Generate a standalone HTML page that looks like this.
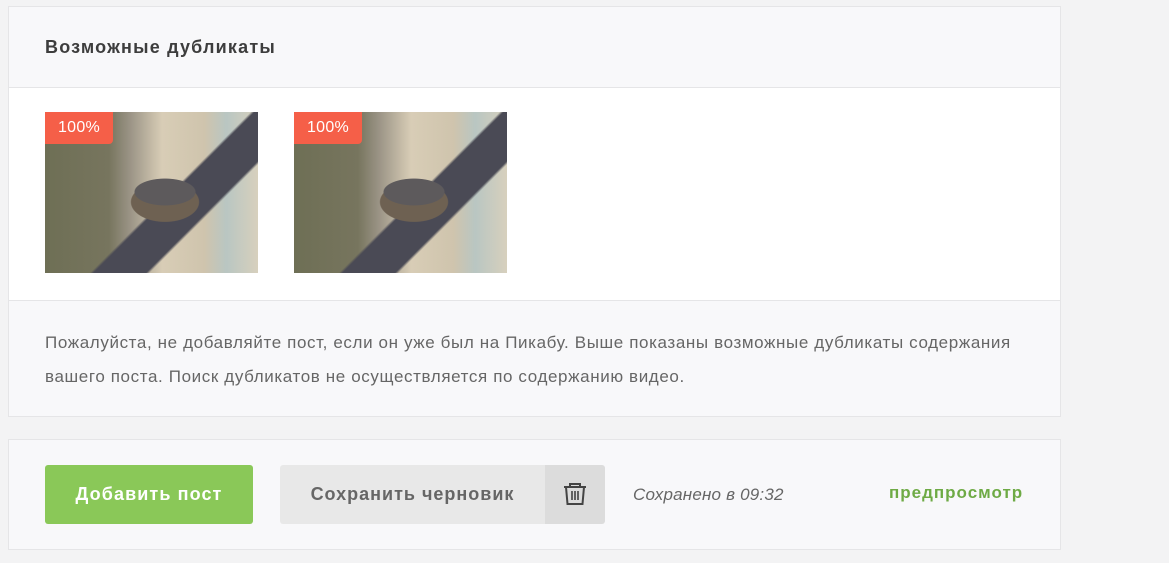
<!DOCTYPE html>
<html><head><meta charset="utf-8"><style>
body{margin:0;width:1169px;height:563px;background:#f3f3f4;font-family:"Liberation Sans","DejaVu Sans",sans-serif;position:relative;overflow:hidden}
.p{position:absolute;left:8px;width:1053px;border:1px solid #e5e5e7;background:#f8f8fa;box-sizing:border-box}
.abs{position:absolute}
.img{position:absolute;top:112px;width:213px;height:161px;overflow:hidden;
background:
radial-gradient(ellipse 50px 22px at 120px 80px,#5d5a5c 60%,transparent 62%),
radial-gradient(ellipse 48px 28px at 120px 90px,#6e6152 70%,transparent 72%),
linear-gradient(135deg,transparent 55%,#4a4a55 56%,#4a4a55 70%,transparent 71%),
linear-gradient(90deg,#6e6f55 0,#77755e 30%,#9b9486 40%,#d8cdb6 55%,#cfc4ad 75%,#b9c6c2 85%,#d7d0bd 100%)}
.badge{position:absolute;left:0;top:0;width:68px;height:32px;background:#f55f48;border-radius:0 0 4px 0;color:#fff;font-size:16px;line-height:32px;text-align:center;letter-spacing:0.3px}
</style></head><body>
<div class="p" style="top:6px;height:411px">
 <div class="abs" style="left:0;top:0;right:0;height:80px;border-bottom:1px solid #e5e5e7;"></div>
 <div class="abs" style="left:36px;top:30px;font-size:18px;color:#3d3d3d;font-weight:bold;letter-spacing:1.2px">Возможные дубликаты</div>
 <div class="abs" style="left:0;right:0;top:81px;height:212px;background:#fff;border-bottom:1px solid #e5e5e7"></div>
 <div class="abs" style="left:36px;top:319px;font-size:17px;line-height:34px;color:#666;width:1040px;letter-spacing:0.62px">Пожалуйста, не добавляйте пост, если он уже был на Пикабу. Выше показаны возможные дубликаты содержания<br>вашего поста. Поиск дубликатов не осуществляется по содержанию видео.</div>
</div>
<div class="img" style="left:45px"><div class="badge">100%</div></div>
<div class="img" style="left:294px"><div class="badge">100%</div></div>
<div class="p" style="top:439px;height:111px"></div>
<div class="abs" style="left:45px;top:465px;width:208px;height:59px;background:#8ac858;border-radius:3px;color:#fff;font-size:18px;font-weight:bold;line-height:59px;text-align:center;letter-spacing:1.1px">Добавить пост</div>
<div class="abs" style="left:280px;top:465px;width:265px;height:59px;background:#e8e8e8;border-radius:3px 0 0 3px;color:#666;font-size:18px;font-weight:bold;line-height:59px;text-align:center;letter-spacing:1px">Сохранить черновик</div>
<div class="abs" style="left:545px;top:465px;width:60px;height:59px;background:#dcdcdc;border-radius:0 3px 3px 0">
<svg width="60" height="59" viewBox="0 0 60 59"><g fill="none" stroke="#444" stroke-width="2"><path d="M19 22h22M25 22v-3h10v3M21 22l1.5 17h15l1.5-17"/><path d="M27 26v9M30 26v9M33 26v9" stroke-width="1.6"/></g></svg></div>
<div class="abs" style="left:633px;top:485px;font-size:17px;font-style:italic;color:#666;letter-spacing:0.2px">Сохранено в 09:32</div>
<div class="abs" style="left:889px;top:483px;font-size:17px;font-weight:bold;color:#6eaa45;letter-spacing:1px">предпросмотр</div>
</body></html>
